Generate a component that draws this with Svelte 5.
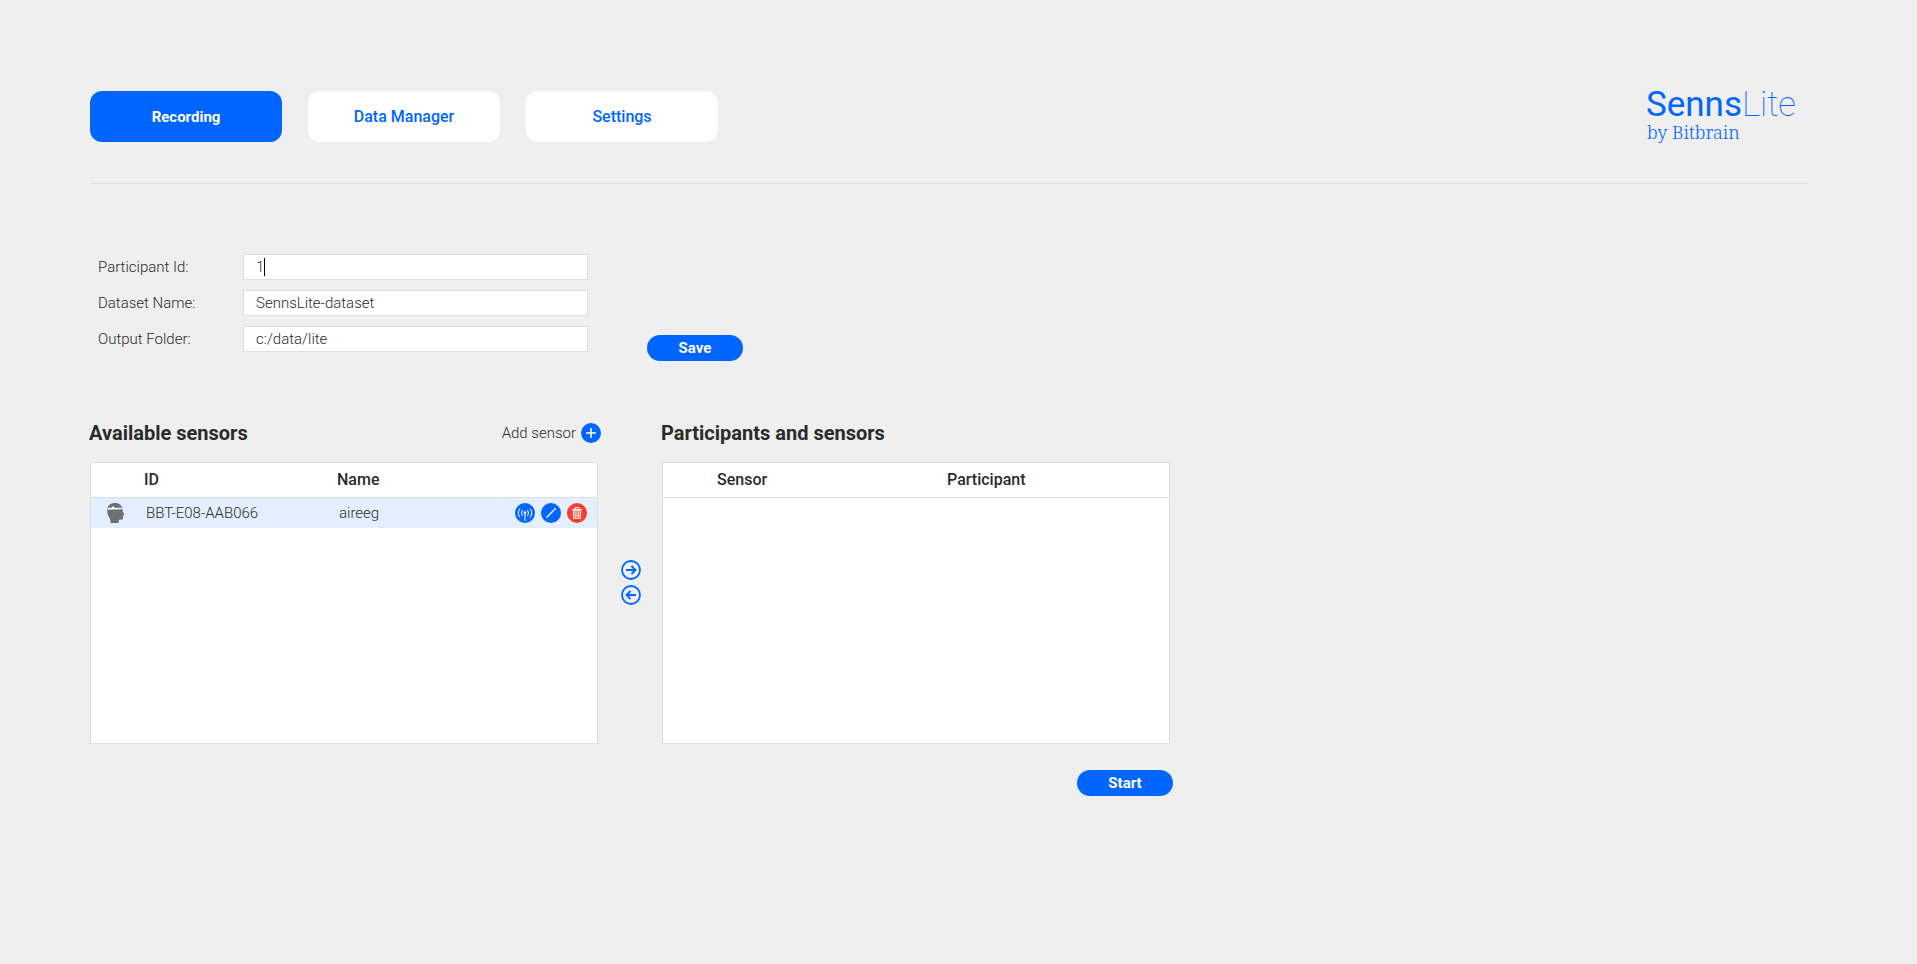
<script>
    let tabs = ['Recording', 'Data Manager', 'Settings'];
    let active = $state('Recording');

    let participantId = $state('1');
    let datasetName = $state('SennsLite-dataset');
    let outputFolder = $state('c:/data/lite');

    let sensors = $state([{ id: 'BBT-E08-AAB066', name: 'aireeg' }]);
    let selected = $state('BBT-E08-AAB066');

    function removeSensor(id) {
        sensors = sensors.filter(s => s.id !== id);
    }
</script>

<main>
    <header>
        <nav>
            {#each tabs as tab}
                <button class="tab" class:active={active === tab} onclick={() => active = tab}>{tab}</button>
            {/each}
        </nav>
        <div class="logo">
            <div class="brand">Senns<span>Lite</span></div>
            <div class="by">by Bitbrain</div>
        </div>
    </header>

    <form onsubmit={(e) => e.preventDefault()}>
        <div class="fields">
            <label for="participant">Participant Id:</label>
            <div class="field">
                <input id="participant" type="text" bind:value={participantId}>
                <span class="caret"></span>
            </div>
            <label for="dataset">Dataset Name:</label>
            <input id="dataset" type="text" bind:value={datasetName}>
            <label for="folder">Output Folder:</label>
            <input id="folder" type="text" bind:value={outputFolder}>
        </div>
        <button class="pill" type="submit">Save</button>
    </form>

    <div class="panels">
        <section>
            <div class="title">
                <h2>Available sensors</h2>
                <button class="add">
                    Add sensor
                    <svg viewBox="0 0 20 20" aria-hidden="true">
                        <circle cx="10" cy="10" r="10" fill="#06f" />
                        <path d="M10 5v10M5 10h10" stroke="#fff" stroke-width="1.5" />
                    </svg>
                </button>
            </div>
            <div class="box">
                <table class="sensors">
                    <thead>
                        <tr><th class="icon"></th><th class="id">ID</th><th>Name</th><th class="actions"></th></tr>
                    </thead>
                    <tbody>
                        {#each sensors as sensor (sensor.id)}
                            <tr class:selected={selected === sensor.id} onclick={() => selected = sensor.id}>
                                <td class="icon">
                                    <svg class="head" viewBox="0 0 18 20" aria-hidden="true">
                                        <path fill="#6d7074" d="M.3 7.200C.3 2.500 3.500 0 8 0c4.500 0 7.300 2.500 7.500 6.800l.3 2 1.400 2.300c.2.500 0 .8-.9 1l-.2 3c0 1-.6 1.500-1.600 1.500l-2 .1c-.6.200-.8.700-.8 1.400V20H3.300c.4-2 .1-3.800-.9-5.200C1 12.500.2 10 .3 7.200z" />
                                        <path fill="#c3d3d6" d="M.8 4.800h14.400l.3 1.500L.4 7z" />
                                        <path fill="#fff" d="M1.200 5h3.300l1.800-2 1.500 2h7v1H1.200z" />
                                    </svg>
                                </td>
                                <td>{sensor.id}</td>
                                <td>{sensor.name}</td>
                                <td class="actions">
                                    <div>
                                        <button aria-label="Connect">
                                            <svg viewBox="0 0 20 20">
                                                <circle cx="10" cy="10" r="10" fill="#06f" />
                                                <path fill="none" stroke="#fff" d="M10 10v8M7.500 7q-2 3 0 6M12.500 7q2 3 0 6M5 5.500q-3.500 4.500 0 9M15 5.500q3.500 4.500 0 9" />
                                                <circle cx="10" cy="9.500" r="1.300" fill="#fff" />
                                            </svg>
                                        </button>
                                        <button aria-label="Edit">
                                            <svg viewBox="0 0 20 20">
                                                <circle cx="10" cy="10" r="10" fill="#06f" />
                                                <path stroke="#fff" stroke-width="1.300" d="M5.500 14.500l8-8" />
                                                <path stroke="#fff" stroke-width="1.600" d="M13.600 6.400l1-1" />
                                            </svg>
                                        </button>
                                        <button aria-label="Delete" onclick={() => removeSensor(sensor.id)}>
                                            <svg viewBox="0 0 20 20">
                                                <circle cx="10" cy="10" r="10" fill="#ff3b30" />
                                                <path fill="none" stroke="#fff" d="M5 6.500h10M8 6V4.500h4V6" />
                                                <path fill="#f77f75" stroke="#fff" d="M6.300 7l.4 8.500h6.600l.4-8.500z" />
                                                <path stroke="#fff" stroke-width=".8" d="M8.800 8.500v5.500M11.200 8.500v5.500" />
                                            </svg>
                                        </button>
                                    </div>
                                </td>
                            </tr>
                        {/each}
                    </tbody>
                </table>
            </div>
        </section>

        <div class="transfer">
            <button aria-label="Assign sensor">
                <svg viewBox="0 0 20 20">
                    <circle cx="10" cy="10" r="9" />
                    <path d="M5 10h9.500M10.500 6l4 4-4 4" />
                </svg>
            </button>
            <button aria-label="Unassign sensor">
                <svg viewBox="0 0 20 20">
                    <circle cx="10" cy="10" r="9" />
                    <path d="M15 10H5.500M9.500 6l-4 4 4 4" />
                </svg>
            </button>
        </div>

        <section>
            <div class="title"><h2>Participants and sensors</h2></div>
            <div class="box">
                <table class="participants">
                    <thead>
                        <tr><th class="sensor">Sensor</th><th>Participant</th></tr>
                    </thead>
                    <tbody></tbody>
                </table>
            </div>
            <button class="pill start">Start</button>
        </section>
    </div>
</main>

<style>
    :global(body) {
        background: #efefef;
    }

    main {
        padding: 88px 109px 0 90px;
        font-family: Roboto, sans-serif;
        font-size: 15px;
        font-weight: 300;
        color: #2b2b2b;
    }

    button {
        padding: 0;
        border: none;
        background: none;
        font: inherit;
        color: inherit;
        cursor: pointer;
    }

    svg {
        display: block;
        width: 20px;
        height: 20px;
    }

    header {
        display: flex;
        justify-content: space-between;
        height: 95px;
        border-bottom: 1px solid #dedede;
    }

    nav {
        display: flex;
        gap: 26px;
        padding-top: 3px;
    }

    .tab {
        width: 192px;
        height: 51px;
        border-radius: 12px;
        background: #fff;
        color: #06f;
        font-size: 16px;
        font-weight: 500;
    }

    .tab.active {
        background: #06f;
        color: #fff;
        font-size: 15px;
        font-weight: 700;
    }

    .logo {
        padding-right: 12px;
        color: #06f;
    }

    .brand {
        font-size: 35px;
        font-weight: 400;
        line-height: 33px;
    }

    .brand span {
        font-weight: 100;
    }

    .by {
        padding-left: 1px;
        font-family: "Noto Serif", "Liberation Serif", serif;
        font-size: 18px;
        font-weight: 300;
        line-height: 22px;
    }

    form {
        display: flex;
        align-items: flex-end;
        gap: 59px;
        margin-top: 70px;
        padding-left: 8px;
    }

    .fields {
        display: grid;
        grid-template-columns: 145px 345px;
        row-gap: 10px;
        align-items: center;
        margin-bottom: 9px;
    }

    .field {
        display: flex;
        position: relative;
    }

    input {
        box-sizing: border-box;
        width: 100%;
        height: 26px;
        padding: 0 12px;
        border: 1px solid #dedede;
        outline: none;
        background: #fff;
        font: inherit;
        color: inherit;
    }

    .caret {
        position: absolute;
        top: 4px;
        left: 21px;
        width: 1px;
        height: 18px;
        background: #000;
    }

    .pill {
        width: 96px;
        height: 26px;
        border-radius: 13px;
        background: #06f;
        color: #fff;
        font-weight: 700;
    }

    .panels {
        display: flex;
        margin-top: 58px;
    }

    section {
        width: 508px;
    }

    .title {
        display: flex;
        align-items: center;
        justify-content: space-between;
        height: 28px;
        margin: 0 -3px 0 -1px;
    }

    h2 {
        margin: 0;
        font-size: 20px;
        font-weight: 700;
    }

    .add {
        display: flex;
        align-items: center;
        gap: 5px;
    }

    .box {
        box-sizing: border-box;
        height: 282px;
        margin-top: 15px;
        border: 1px solid #dedede;
        background: #fff;
    }

    table {
        width: 100%;
        border-collapse: collapse;
        table-layout: fixed;
    }

    th {
        height: 32px;
        padding: 0 0 2px;
        border-bottom: 1px solid #dedede;
        font-size: 16px;
        font-weight: 500;
        text-align: left;
    }

    td {
        height: 30px;
        padding: 0 0 0 2px;
    }

    .selected {
        background: #e3effe;
    }

    .icon {
        width: 53px;
    }

    .id {
        width: 193px;
    }

    .head {
        width: 18px;
        margin-left: 14px;
    }

    th.actions {
        width: 84px;
    }

    .actions div {
        display: flex;
        gap: 6px;
    }

    .sensor {
        width: 230px;
        padding-left: 54px;
    }

    .transfer {
        display: flex;
        flex-direction: column;
        align-items: flex-end;
        gap: 5px;
        width: 43px;
        padding: 141px 21px 0 0;
    }

    .transfer svg {
        fill: none;
        stroke: #06f;
        stroke-width: 1.8;
    }

    .start {
        display: block;
        margin: 26px -3px 0 auto;
    }
</style>
